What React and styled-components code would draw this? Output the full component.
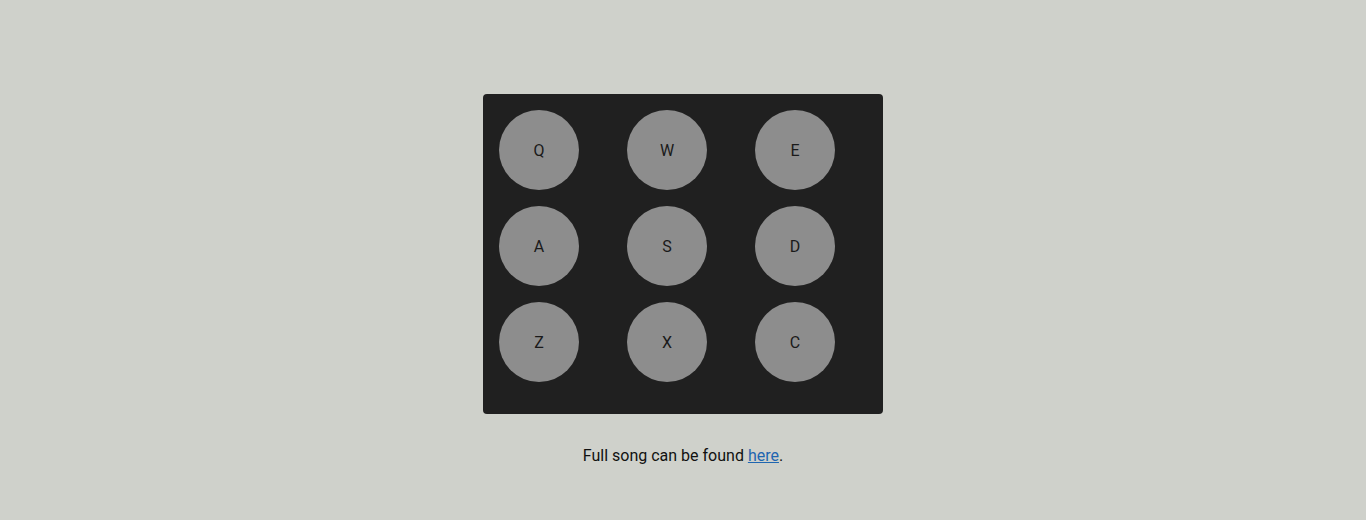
import React from "react";
import styled, { createGlobalStyle } from "styled-components";

const Global = createGlobalStyle`
  html, body { margin: 0; padding: 0; background: #cfd1cb; }
  body { font-family: Roboto, "Liberation Sans", sans-serif; color: #111; }
`;

const Page = styled.div`
  display: flex;
  flex-direction: column;
  align-items: center;
  padding-top: 94px;
`;

const Machine = styled.div`
  width: 400px;
  box-sizing: border-box;
  padding: 16px 0 32px 16px;
  background: #202020;
  border-radius: 4px;
  display: grid;
  grid-template-columns: repeat(3, 128px);
  grid-auto-rows: 80px;
  row-gap: 16px;
`;

const Pad = styled.div`
  width: 80px;
  height: 80px;
  border-radius: 50%;
  background: #8d8d8d;
  display: flex;
  align-items: center;
  justify-content: center;
  font-size: 16px;
  color: #1a1a1a;
`;

const Note = styled.p`
  margin: 32px 0 0;
  font-size: 16px;
  line-height: 19px;
  color: #111;
`;

const Link = styled.a`
  color: #1f66b0;
  text-decoration: underline;
`;

const keys = ["Q", "W", "E", "A", "S", "D", "Z", "X", "C"];

export default function App() {
  return (
    <>
      <Global />
      <Page>
        <Machine>
          {keys.map((k) => (
            <Pad key={k}>{k}</Pad>
          ))}
        </Machine>
        <Note>
          Full song can be found <Link href="#">here</Link>.
        </Note>
      </Page>
    </>
  );
}
